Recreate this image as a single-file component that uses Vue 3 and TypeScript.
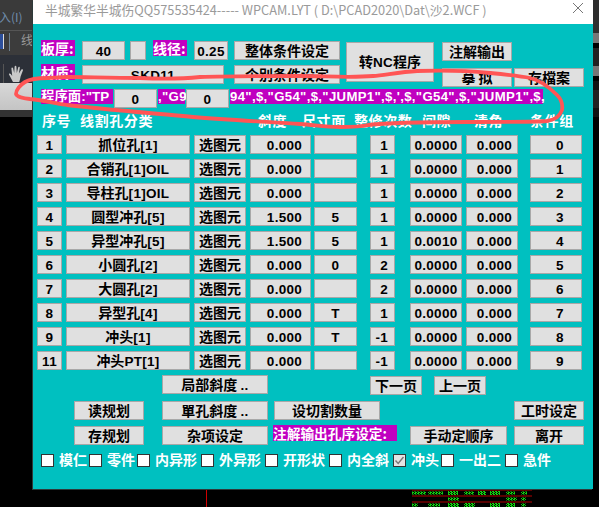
<script setup lang="ts">
interface Row {
  no: string; name: string; tag: string; slope: string; size: string;
  cnt: string; gap: string; clear: string; grp: string;
}
const mk = (no: string, name: string, tag: string, slope: string, size: string, cnt: string, gap: string, grp: string): Row =>
  ({ no, name, tag, slope, size, cnt, gap, clear: '0.000', grp });
const rows: Row[] = [
  mk('1', '抓位孔', '[1]', '0.000', '', '1', '0.0000', '0'),
  mk('2', '合销孔', '[1]OIL', '0.000', '', '1', '0.0000', '1'),
  mk('3', '导柱孔', '[1]OIL', '0.000', '', '1', '0.0000', '2'),
  mk('4', '圆型冲孔', '[5]', '1.500', '5', '1', '0.0000', '3'),
  mk('5', '异型冲孔', '[5]', '1.500', '5', '1', '0.0010', '4'),
  mk('6', '小圆孔', '[2]', '0.000', '0', '2', '0.0000', '5'),
  mk('7', '大圆孔', '[2]', '0.000', '', '2', '0.0000', '6'),
  mk('8', '异型孔', '[4]', '0.000', 'T', '1', '0.0000', '7'),
  mk('9', '冲头', '[1]', '0.000', 'T', '-1', '0.0000', '8'),
  mk('11', '冲头', 'PT[1]', '0.000', '', '-1', '0.0000', '9'),
];
const heads = ['序号', '线割孔分类', '斜度', '尺寸面', '整修次数', '间隙', '清角', '条件组'];
const checks = [
  { t: '模仁', on: false }, { t: '零件', on: false }, { t: '内异形', on: false },
  { t: '外异形', on: false }, { t: '开形状', on: false }, { t: '内全斜', on: false },
  { t: '冲头', on: true }, { t: '一出二', on: false }, { t: '急件', on: false },
];
</script>

<template>
  <div class="desktop">
    <div class="behind left">
      <div class="l-menu"><span class="menu-text">入(I)</span></div>
      <div class="l-tool"><i class="blue"></i><i class="sep"></i><span class="xian">线</span></div>
      <div class="l-tool2">
        <i class="sep2"></i>
        <svg class="hand" viewBox="0 0 18 18" width="18" height="18">
          <path d="M5 17 L1 9.5 C0.6 8.4 2 8 2.8 9 L4.2 11 L3.4 3.4 C3.3 2.2 4.9 2.2 5.1 3.3 L6.2 8 L6.6 1.7 C6.7 0.5 8.3 0.5 8.4 1.7 L8.8 8 L10.2 2.4 C10.5 1.2 12 1.6 11.8 2.8 L10.9 8.6 L13.4 4.6 C14 3.7 15.3 4.3 14.9 5.4 L12.6 11.5 C12.2 13.5 11.8 15.5 11.2 17 Z" fill="#c9c9c9" />
        </svg>
      </div>
      <div class="l-gray"></div>
      <div class="l-dark"></div>
    </div>
    <div class="behind right">
      <div class="r1"></div><div class="r2"></div><div class="r3"></div><div class="r2"></div><div class="r4"></div><div class="r3"></div><div class="r4"></div>
    </div>
    <svg class="behind cad" viewBox="0 0 599 18" width="599" height="18">
      <defs>
        <pattern id="dither" width="3" height="2" patternUnits="userSpaceOnUse">
          <rect width="2" height="1" fill="#10d010" />
          <rect x="1" y="1" width="2" height="1" fill="#10d010" />
        </pattern>
      </defs>
      <rect x="206" y="0" width="1" height="18" fill="#d00000" />
      <g fill="#b00000">
        <rect x="412" y="0.5" width="120" height="1" />
        <rect x="412" y="6.5" width="120" height="1" />
        <rect x="412" y="12.5" width="120" height="1" />
      </g>
      <g fill="url(#dither)">
        <rect x="412" y="2.5" width="14" height="3" /><rect x="428" y="2.5" width="15" height="3" />
        <rect x="448" y="2" width="10" height="4" /><rect x="464" y="2.5" width="10" height="3" />
        <rect x="478" y="2" width="8" height="4" /><rect x="490" y="2" width="10" height="4" />
        <rect x="506" y="2.5" width="9" height="3" /><rect x="521" y="2.5" width="6" height="3" />
        <rect x="448" y="8.5" width="11" height="3" /><rect x="506" y="8.5" width="11" height="3" /><rect x="521" y="8.5" width="5" height="3" />
        <rect x="412" y="14.5" width="6" height="3" /><rect x="428" y="14.5" width="12" height="3" />
        <rect x="448" y="14" width="11" height="4" /><rect x="464" y="14" width="11" height="4" />
        <rect x="490" y="14" width="10" height="4" /><rect x="506" y="14" width="9" height="4" /><rect x="521" y="14.5" width="5" height="3" />
      </g>
    </svg>

    <section class="window">
      <header class="title">
        <span class="title-text">半城繁华半城伤QQ575535424----- WPCAM.LYT ( D:\PCAD2020\Dat\沙2.WCF )</span>
        <svg class="close" viewBox="0 0 10 10" width="10" height="10">
          <path d="M0 0 L10 10 M10 0 L0 10" stroke="#777" stroke-width="1" />
        </svg>
      </header>

      <div class="body">
        <div class="top">
          <div class="top-left">
            <div class="line">
              <span class="tag w34">板厚:</span>
              <div class="btn w43 ml7"><span class="lat">40</span></div>
              <div class="btn w16 ml5"></div>
              <span class="tag w34 ml7">线径:</span>
              <div class="btn w34 ml7"><span class="lat">0.25</span></div>
              <button class="btn w106 ml6">整体条件设定</button>
            </div>
            <div class="line mt5">
              <span class="tag w34">材质:</span>
              <div class="btn w142 ml7"><span class="lat">SKD11</span></div>
              <button class="btn w106 ml10">个别条件设定</button>
            </div>
          </div>
          <button class="btn nc">转<span class="lat">NC</span>程序</button>
          <div class="top-right">
            <button class="btn w70">注解输出</button>
            <div class="line mt7">
              <button class="btn w70">摹 拟</button>
              <button class="btn w70 ml2">存檔案</button>
            </div>
          </div>
        </div>

        <div class="program">
          <span class="tag prog first-prog w72">程序面:"TP</span>
          <div class="btn w43 ml1"><span class="lat">0</span></div>
          <span class="tag prog w27 ml1">,"G9</span>
          <div class="btn w43 ml1"><span class="lat">0</span></div>
          <span class="tag prog w313 ml1">94",$,"G54",$,"JUMP1",$,',$,"G54",$,"JUMP1",$,</span>
        </div>

        <div class="heads">
          <span v-for="h in heads" :key="h" class="head">{{ h }}</span>
        </div>

        <div v-for="r in rows" :key="r.no" class="row">
          <div class="btn c-no"><span class="lat">{{ r.no }}</span></div>
          <button class="btn c-name">{{ r.name }}<span class="lat">{{ r.tag }}</span></button>
          <button class="btn c-sel">选图元</button>
          <div class="btn c-slope"><span class="lat">{{ r.slope }}</span></div>
          <div class="btn c-size"><span class="lat">{{ r.size }}</span></div>
          <div class="btn c-cnt"><span class="lat">{{ r.cnt }}</span></div>
          <div class="btn c-gap"><span class="lat">{{ r.gap }}</span></div>
          <div class="btn c-clear"><span class="lat">{{ r.clear }}</span></div>
          <div class="btn c-grp"><span class="lat">{{ r.grp }}</span></div>
        </div>

        <div class="bottom b1">
          <button class="btn w106">局部斜度 <span class="lat">..</span></button>
          <button class="btn w52 page first">下一页</button>
          <button class="btn w52 page next">上一页</button>
        </div>
        <div class="bottom b2">
          <button class="btn w70">读规划</button>
          <button class="btn w106 ml18">單孔斜度 <span class="lat">..</span></button>
          <button class="btn w106 ml6">设切割数量</button>
          <button class="btn w70 ml134">工时设定</button>
        </div>
        <div class="bottom b2">
          <button class="btn w70">存规划</button>
          <button class="btn w106 ml18">杂项设定</button>
          <span class="tag note">注解输出孔序设定:</span>
          <button class="btn w97">手动定顺序</button>
          <button class="btn w70 ml7">离开</button>
        </div>

        <div class="checks">
          <label v-for="c in checks" :key="c.t" class="check">
            <span class="box" :class="{ on: c.on }">
              <svg v-if="c.on" viewBox="0 0 11 11" width="11" height="11">
                <path d="M1.5 5.5 L4.2 8.5 L9.5 2" fill="none" stroke="#777" stroke-width="1.4" />
              </svg>
            </span>
            <span class="check-text">{{ c.t }}</span>
          </label>
        </div>
      </div>
    </section>

    <svg class="ink" viewBox="0 0 599 507" width="599" height="507">
      <path d="M48 78 C38 78 30 79 25 82 C20 85 16 90 16 94 C17 97 22 98 30 99 C40 100 55 103 67 105 C100 109 150 113 193 117 C230 120 270 122 300 124 C315 125 325 127 340 127 C350 127 360 127 368 125 C385 123 420 122 467 122 C500 122 530 122 547 121 C555 120 560 116 562 110 C563 104 562 100 557 95 C550 88 540 80 530 78 C520 76 510 75 490 73 C470 71 445 70 417 71 C400 72 385 75 373 76 C350 78 325 76 300 76 C265 76 230 76 200 77 C180 79 165 79 140 78 C110 78 85 77 67 77 C58 77 53 78 48 78 Z" fill="none" stroke="#ff5555" stroke-width="3.8" stroke-linejoin="round" />
    </svg>
  </div>
</template>

<style>
html, body { margin: 0; background: #000; }
</style>

<style scoped>
.desktop {
  position: relative;
  width: 599px;
  height: 507px;
  overflow: hidden;
  background: #000;
  font-family: "Noto Sans CJK SC", "Liberation Sans", sans-serif;
}
.behind { position: absolute; }
.left { left: 0; top: 0; width: 33px; }
.l-menu { height: 30px; background: #3a3a3a; color: #6f8cab; font-size: 12px; line-height: 34px; }
.menu-text { margin-left: -1px; font-family: "Noto Sans CJK SC", sans-serif; }
.l-tool { position: relative; height: 25px; background: #3c3c3c; border-top: 1px solid #555; box-sizing: border-box; }
.blue { position: absolute; left: 0; top: 3px; width: 3px; height: 15px; background: #2c4f9c; border-right: 1px solid #ddd; }
.sep { position: absolute; left: 9px; top: 2px; width: 1px; height: 18px; background: #6c7f90; }
.xian { position: absolute; left: 21px; top: 0; font-size: 12px; color: #999; }
.l-tool2 { position: relative; height: 28px; background: #2c3038; }
.sep2 { position: absolute; left: 3px; top: 9px; width: 1px; height: 19px; background: #555; }
.hand { position: absolute; left: 8px; top: 10px; }
.l-gray { height: 27px; background: linear-gradient(#d8d8d8, #c4c4c4); }
.l-dark { height: 7px; background: #333; }
.right { left: 593px; top: 0; width: 6px; display: flex; flex-direction: column; }
.r1 { height: 33px; background: #2e2e2e; }
.r2 { height: 10px; background: #777; margin-bottom: 5px; }
.r3 { height: 18px; background: #222; }
.r4 { height: 9px; background: #111; }
.cad { left: 0; top: 489px; }

.window {
  position: relative;
  width: 560px;
  height: 489px;
  margin-left: 33px;
  display: flex;
  flex-direction: column;
  box-shadow: -1px 1px 0 #2d3a3a;
}
.title {
  position: relative;
  height: 24px;
  flex: none;
  background: #fff;
  display: flex;
  align-items: center;
  padding-left: 12px;
}
.title-text { font-size: 12.75px; color: #9a9a9a; white-space: nowrap; margin-top: -6px; }
.close { position: absolute; right: 10px; top: 3px; }

.body { flex: 1; background: #00c0c0; padding-top: 17px; }

.btn {
  display: block;
  box-sizing: border-box;
  flex: none;
  height: 19px;
  margin: 0;
  padding: 0;
  border: 1px solid #a8a8a8;
  background: #e0e0e0;
  color: #000;
  font: 700 14px/17px "Noto Sans CJK SC", "Liberation Sans", sans-serif;
  text-align: center;
  white-space: nowrap;
}
.lat { font-family: "Liberation Sans", sans-serif; font-size: 13.5px; font-weight: 700; letter-spacing: 0.3px; }

.tag {
  flex: none;
  height: 16px;
  margin-top: -1px;
  background: #c000c0;
  color: #fff;
  font: 700 14px/16px "Noto Sans CJK SC", "Liberation Sans", sans-serif;
  white-space: nowrap;
}
.line { display: flex; }
.top { display: flex; height: 48px; padding-left: 8px; }
.top-left { width: 299px; flex: none; }
.nc { width: 88px; height: 40px; margin: 1px 0 0 6px; }
.top-right { margin: 1px 0 0 8px; }

.w16 { width: 16px; } .w27 { width: 27px; } .w34 { width: 34px; } .w43 { width: 43px; }
.w52 { width: 52px; } .w70 { width: 70px; } .w72 { width: 72px; } .w97 { width: 97px; }
.w106 { width: 106px; } .w142 { width: 142px; } .w313 { width: 313px; }
.ml1 { margin-left: 1px; } .ml2 { margin-left: 2px; } .ml5 { margin-left: 5px; } .ml6 { margin-left: 6px; }
.ml7 { margin-left: 7px; } .ml10 { margin-left: 10px; } .ml18 { margin-left: 18px; } .ml134 { margin-left: 134px; }
.mt5 { margin-top: 5px; } .mt7 { margin-top: 7px; }

.program { display: flex; height: 19px; padding-left: 8px; }
.prog {
  margin-top: 0;
  height: 15px;
  line-height: 15px;
  font-family: "Liberation Sans", "Noto Sans CJK SC", sans-serif;
  font-size: 13.2px;
  letter-spacing: 0.33px;
}
.first-prog { font-size: 13.4px; letter-spacing: 0; }

.heads {
  display: grid;
  grid-template-columns: 38px 178px 44px 52px 68px 52px 56px 1fr;
  height: 20px;
  margin: 2px 0 5px;
  padding-left: 9px;
}
.head { color: #fff; font-size: 14px; font-weight: 700; line-height: 20px; letter-spacing: 0.6px; white-space: nowrap; }

.row { display: flex; padding-left: 4px; margin-bottom: 5px; }
.c-no { width: 25px; margin-right: 4px; }
.c-name { width: 124px; margin-right: 4px; }
.c-sel { width: 52px; margin-right: 4px; }
.c-slope { width: 61px; margin-right: 3px; padding-left: 8px; }
.c-size { width: 43px; margin-right: 13px; }
.c-cnt { width: 25px; margin-right: 15px; padding-right: 6px; text-align: right; }
.c-gap { width: 52px; margin-right: 4px; }
.c-clear { width: 52px; margin-right: 12px; padding-left: 5px; }
.c-grp { width: 52px; padding-left: 8px; }

.bottom { display: flex; }
.b1 { padding-left: 129px; margin: 4px 0 7px; height: 19px; }
.b2 { padding-left: 41px; margin-bottom: 6px; }
.page { margin-top: 1px; }
.first { margin-left: 102px; }
.next { margin-left: 12px; }
.note { width: 124px; margin: -1px 13px 0 5px; letter-spacing: 0; font-size: 13.7px; }

.checks {
  display: grid;
  grid-template-columns: 48px 48px 64px 64px 64px 64px 48px 64px 64px;
  padding-left: 8px;
  margin-top: 5px;
}
.check { display: flex; align-items: center; height: 16px; }
.box {
  box-sizing: border-box;
  width: 13px;
  height: 13px;
  flex: none;
  background: #fff;
  border: 1px solid #333;
  margin-top: 2px;
  display: block;
}
.box.on { background: #e4e4e4; }
.box svg { display: block; }
.check-text { margin-left: 5px; color: #fff; font-size: 14px; font-weight: 700; line-height: 16px; white-space: nowrap; margin-top: -1px; }

.ink { position: absolute; left: 0; top: 0; pointer-events: none; }
</style>
